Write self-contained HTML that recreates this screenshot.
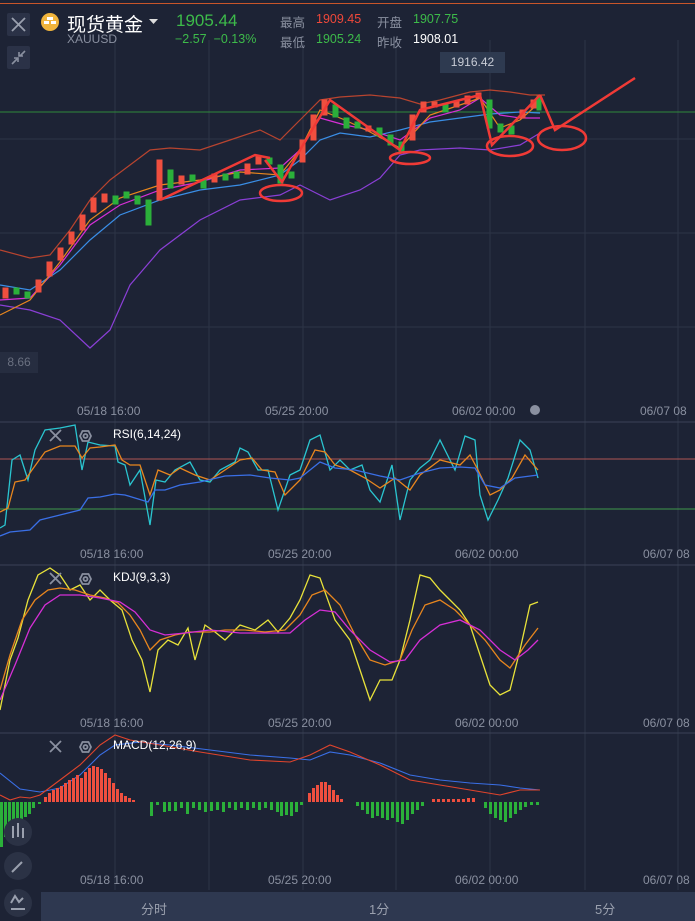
<!DOCTYPE html>
<html><head><meta charset="utf-8"><style>
html,body{margin:0;padding:0;background:#1d2335;width:695px;height:921px;overflow:hidden;font-family:"Liberation Sans","Noto Sans CJK SC",sans-serif}
.t{position:absolute;white-space:nowrap}
</style></head><body>
<div style="position:absolute;left:0;top:3px;width:695px;height:1px;background:#c8552a"></div>
<svg width="695" height="921" style="position:absolute;left:0;top:0">
<!-- grid -->
<g stroke="#2d3447" stroke-width="1">
<line x1="115" y1="40" x2="115" y2="890"/><line x1="209" y1="40" x2="209" y2="890"/><line x1="303" y1="40" x2="303" y2="890"/><line x1="396" y1="40" x2="396" y2="890"/><line x1="490" y1="40" x2="490" y2="890"/><line x1="585" y1="40" x2="585" y2="890"/><line x1="678" y1="40" x2="678" y2="890"/>
<line x1="0" y1="139" x2="695" y2="139"/><line x1="0" y1="233" x2="695" y2="233"/><line x1="0" y1="327" x2="695" y2="327"/>
</g>
<g stroke="#3a4256"><line x1="0" y1="422" x2="695" y2="422"/><line x1="0" y1="565" x2="695" y2="565"/><line x1="0" y1="733" x2="695" y2="733"/></g>
<line x1="0" y1="112" x2="695" y2="112" stroke="#2e8a3a"/>
<!-- bands -->
<g fill="none" stroke-width="1.2">
<polyline stroke="#b8442f" points="0,250 30,258 50,255 70,230 90,200 110,180 130,165 150,150 170,148 200,150 230,140 260,130 280,140 300,120 320,100 340,97 370,95 400,98 420,104 440,100 470,92 490,90 510,92 530,95 545,95"/>
<polyline stroke="#8a3fd6" points="0,305 30,310 60,320 90,348 110,330 130,285 160,250 200,220 240,200 280,195 300,185 330,200 360,190 380,178 400,155 420,150 460,148 490,150 520,145 540,133"/>
<polyline stroke="#3a8ee6" points="0,285 30,290 60,270 90,240 120,215 160,200 200,190 240,185 280,175 300,160 320,140 340,133 370,137 400,130 430,122 460,118 490,114 520,112 540,113"/>
<polyline stroke="#d62fd6" points="0,300 30,298 60,265 90,225 120,205 160,190 200,182 240,170 280,168 300,150 320,118 345,125 370,130 400,140 430,118 460,110 480,98 500,115 520,118 540,118"/>
<polyline stroke="#e8861e" points="0,315 30,300 60,262 90,220 120,198 160,185 200,180 240,172 280,175 300,150 320,110 345,120 370,132 400,148 430,115 460,105 480,98 500,128 520,120 540,102"/>
</g>
<!-- candles -->
<g id="c">
<g fill="#ef4f3f" stroke="#ef4f3f">
<rect x="3" y="288" width="5" height="10"/><rect x="36" y="280" width="5" height="12"/><rect x="47" y="262" width="5" height="14"/><rect x="58" y="248" width="5" height="12"/><rect x="69" y="232" width="5" height="12"/><rect x="80" y="215" width="5" height="15"/><rect x="91" y="198" width="5" height="14"/><rect x="102" y="194" width="5" height="8"/><rect x="157" y="160" width="5" height="40"/><rect x="179" y="176" width="5" height="8"/><rect x="212" y="174" width="5" height="8"/><rect x="245" y="164" width="5" height="10"/><rect x="256" y="156" width="5" height="8"/><rect x="300" y="140" width="5" height="22"/><rect x="311" y="115" width="5" height="25"/><rect x="322" y="100" width="5" height="15"/><rect x="366" y="126" width="5" height="5"/><rect x="410" y="115" width="5" height="25"/><rect x="421" y="102" width="5" height="10"/><rect x="432" y="102" width="5" height="5"/><rect x="454" y="102" width="5" height="5"/><rect x="465" y="96" width="5" height="8"/><rect x="476" y="93" width="5" height="5"/><rect x="520" y="110" width="5" height="8"/><rect x="531" y="100" width="5" height="8"/>
</g>
<g fill="#2bb03a" stroke="#2bb03a">
<rect x="14" y="288" width="5" height="6"/><rect x="25" y="292" width="5" height="6"/><rect x="113" y="196" width="5" height="8"/><rect x="124" y="192" width="5" height="6"/><rect x="135" y="196" width="5" height="8"/><rect x="146" y="200" width="5" height="25"/><rect x="168" y="170" width="5" height="18"/><rect x="190" y="175" width="5" height="6"/><rect x="201" y="180" width="5" height="8"/><rect x="223" y="174" width="5" height="6"/><rect x="234" y="172" width="5" height="6"/><rect x="267" y="158" width="5" height="6"/><rect x="278" y="165" width="5" height="18"/><rect x="289" y="172" width="5" height="6"/><rect x="333" y="105" width="5" height="12"/><rect x="344" y="118" width="5" height="10"/><rect x="355" y="122" width="5" height="6"/><rect x="377" y="128" width="5" height="8"/><rect x="388" y="135" width="5" height="10"/><rect x="399" y="142" width="5" height="10"/><rect x="443" y="104" width="5" height="8"/><rect x="487" y="100" width="5" height="28"/><rect x="498" y="124" width="5" height="8"/><rect x="509" y="126" width="5" height="8"/><rect x="537" y="96" width="4" height="14"/>
</g>
</g>
<!-- annotations -->
<g fill="none" stroke="#f03a36" stroke-width="2.5">
<polyline points="160,200 255,155 270,158"/><polyline points="265,160 282,182 300,150 330,100 400,150 420,110 480,95 492,145 540,95"/><polyline points="540,95 555,130 635,78"/>
<ellipse cx="281" cy="193" rx="21" ry="8"/><ellipse cx="410" cy="158" rx="20" ry="6"/><ellipse cx="510" cy="146" rx="23" ry="10"/><ellipse cx="562" cy="138" rx="24" ry="12"/>
</g>
<!-- RSI -->
<line x1="0" y1="459" x2="695" y2="459" stroke="#b05454"/><line x1="0" y1="509" x2="695" y2="509" stroke="#3f9a4a"/>
<g fill="none" stroke-width="1.3">
<polyline stroke="#2ac5d0" points="0,528 5,525 12,460 20,455 28,480 35,450 45,430 60,428 75,425 82,470 88,442 100,445 115,446 118,462 125,465 130,485 140,470 150,525 156,480 165,482 175,470 190,462 200,480 210,482 220,470 235,462 240,448 248,452 258,470 268,470 278,510 290,475 300,470 310,440 320,435 330,470 340,460 350,470 362,465 370,490 380,502 392,465 400,520 410,480 420,468 430,460 440,440 455,470 465,436 475,440 480,495 488,520 498,500 508,478 520,440 530,450 538,478"/>
<polyline stroke="#e8861e" points="0,512 8,508 15,482 25,480 32,470 45,452 60,446 75,446 82,458 90,448 100,447 115,445 122,460 130,465 140,465 150,495 158,470 170,475 180,468 195,475 210,480 225,470 240,460 252,458 262,470 275,472 285,495 300,480 315,450 325,452 335,465 350,470 365,478 380,488 395,478 410,490 420,475 440,460 460,465 470,455 478,470 490,495 500,490 512,478 525,455 538,470"/>
<polyline stroke="#3a6fe6" points="0,536 10,532 30,530 40,520 60,515 80,510 88,498 100,497 115,494 125,495 148,502 155,490 165,490 180,485 200,482 225,476 250,475 270,478 290,480 300,478 320,462 335,468 355,470 380,476 400,480 420,473 440,468 460,467 475,468 485,485 500,488 515,478 538,475"/>
</g>
<!-- KDJ -->
<g fill="none" stroke-width="1.3">
<polyline stroke="#e8e23a" points="0,710 10,660 18,638 28,600 38,575 50,568 60,575 70,590 80,585 90,600 100,590 110,600 122,610 132,640 142,660 150,692 158,650 168,640 178,645 188,628 195,660 205,625 215,632 225,640 240,625 255,630 268,620 278,632 290,618 300,600 310,575 320,578 335,620 350,640 360,670 370,700 380,680 392,680 400,660 410,620 420,575 430,578 440,590 450,600 460,610 470,625 480,655 490,685 500,695 510,690 520,650 530,605 538,602"/>
<polyline stroke="#e8861e" points="0,690 10,655 22,620 35,600 48,590 60,588 75,590 90,595 105,598 118,603 130,615 140,630 150,650 160,640 175,635 190,632 210,632 225,630 245,630 265,632 285,630 300,615 312,595 325,590 340,605 355,635 370,660 385,665 400,660 412,630 425,605 440,600 455,610 470,625 485,640 500,660 510,668 525,645 538,628"/>
<polyline stroke="#d62fd6" points="0,700 15,665 30,628 45,605 60,595 80,595 100,598 120,602 135,612 150,630 165,635 185,633 210,630 240,633 265,633 290,633 305,620 320,610 335,612 350,630 370,650 390,662 405,660 420,640 440,625 460,620 480,630 500,650 515,660 528,650 538,640"/>
</g>
<!-- MACD -->
<g fill="none" stroke-width="1.1">
<polyline stroke="#3a6fe6" points="0,773 20,789 40,792 60,788 80,775 100,755 115,745 140,742 170,745 210,750 250,755 290,758 310,760 330,752 350,755 380,763 410,775 440,780 470,783 500,785 520,788 540,790"/>
<polyline stroke="#e0442c" points="0,795 10,800 20,797 30,798 40,795 60,780 80,765 100,745 115,735 130,740 160,745 200,752 250,760 290,762 310,755 330,745 350,752 380,765 410,780 440,785 470,790 500,795 520,790 540,790"/>
</g>
<g fill="#ef4f3f">
<rect x="44" y="797" width="3" height="5"/><rect x="48" y="793" width="3" height="9"/><rect x="52" y="790" width="3" height="12"/><rect x="56" y="788" width="3" height="14"/><rect x="60" y="786" width="3" height="16"/><rect x="64" y="783" width="3" height="19"/><rect x="68" y="780" width="3" height="22"/><rect x="72" y="778" width="3" height="24"/><rect x="76" y="775" width="3" height="27"/><rect x="80" y="778" width="3" height="24"/><rect x="84" y="772" width="3" height="30"/><rect x="88" y="768" width="3" height="34"/><rect x="92" y="766" width="3" height="36"/><rect x="96" y="767" width="3" height="35"/><rect x="100" y="769" width="3" height="33"/><rect x="104" y="773" width="3" height="29"/><rect x="108" y="778" width="3" height="24"/><rect x="112" y="783" width="3" height="19"/><rect x="116" y="789" width="3" height="13"/><rect x="120" y="793" width="3" height="9"/><rect x="124" y="796" width="3" height="6"/><rect x="128" y="798" width="3" height="4"/><rect x="132" y="800" width="3" height="2"/>
<rect x="308" y="793" width="3" height="9"/><rect x="312" y="788" width="3" height="14"/><rect x="316" y="785" width="3" height="17"/><rect x="320" y="782" width="3" height="20"/><rect x="324" y="782" width="3" height="20"/><rect x="328" y="785" width="3" height="17"/><rect x="332" y="790" width="3" height="12"/><rect x="336" y="795" width="3" height="7"/><rect x="340" y="799" width="3" height="3"/>
<rect x="432" y="799" width="3" height="3"/><rect x="437" y="799" width="3" height="3"/><rect x="442" y="799" width="3" height="3"/><rect x="447" y="799" width="3" height="3"/><rect x="452" y="799" width="3" height="3"/><rect x="457" y="799" width="3" height="3"/><rect x="462" y="799" width="3" height="3"/><rect x="467" y="798" width="3" height="4"/><rect x="472" y="798" width="3" height="4"/>
</g>
<g fill="#2bb03a">
<rect x="0" y="802" width="3" height="45"/><rect x="4" y="802" width="3" height="35"/><rect x="8" y="802" width="3" height="30"/><rect x="12" y="802" width="3" height="28"/><rect x="16" y="802" width="3" height="25"/><rect x="20" y="802" width="3" height="20"/><rect x="24" y="802" width="3" height="15"/><rect x="28" y="802" width="3" height="12"/><rect x="32" y="802" width="3" height="6"/><rect x="38" y="802" width="3" height="2"/>
<rect x="150" y="802" width="3" height="14"/><rect x="156" y="802" width="3" height="3"/><rect x="163" y="802" width="3" height="10"/><rect x="168" y="802" width="3" height="9"/><rect x="174" y="802" width="3" height="9"/><rect x="180" y="802" width="3" height="6"/><rect x="186" y="802" width="3" height="12"/><rect x="192" y="802" width="3" height="6"/><rect x="198" y="802" width="3" height="8"/><rect x="204" y="802" width="3" height="10"/><rect x="210" y="802" width="3" height="9"/><rect x="216" y="802" width="3" height="8"/><rect x="222" y="802" width="3" height="10"/><rect x="228" y="802" width="3" height="6"/><rect x="234" y="802" width="3" height="8"/><rect x="240" y="802" width="3" height="6"/><rect x="246" y="802" width="3" height="8"/><rect x="252" y="802" width="3" height="6"/><rect x="258" y="802" width="3" height="8"/><rect x="264" y="802" width="3" height="6"/><rect x="270" y="802" width="3" height="8"/><rect x="276" y="802" width="3" height="10"/><rect x="280" y="802" width="3" height="14"/><rect x="285" y="802" width="3" height="13"/><rect x="290" y="802" width="3" height="14"/><rect x="295" y="802" width="3" height="10"/><rect x="300" y="802" width="3" height="3"/>
<rect x="356" y="802" width="3" height="4"/><rect x="361" y="802" width="3" height="8"/><rect x="366" y="802" width="3" height="12"/><rect x="371" y="802" width="3" height="16"/><rect x="376" y="802" width="3" height="14"/><rect x="381" y="802" width="3" height="16"/><rect x="386" y="802" width="3" height="18"/><rect x="391" y="802" width="3" height="16"/><rect x="396" y="802" width="3" height="20"/><rect x="401" y="802" width="3" height="22"/><rect x="406" y="802" width="3" height="18"/><rect x="411" y="802" width="3" height="12"/><rect x="416" y="802" width="3" height="8"/><rect x="421" y="802" width="3" height="4"/>
<rect x="484" y="802" width="3" height="6"/><rect x="489" y="802" width="3" height="12"/><rect x="494" y="802" width="3" height="16"/><rect x="499" y="802" width="3" height="18"/><rect x="504" y="802" width="3" height="20"/><rect x="509" y="802" width="3" height="16"/><rect x="514" y="802" width="3" height="12"/><rect x="519" y="802" width="3" height="8"/><rect x="524" y="802" width="3" height="5"/><rect x="530" y="802" width="3" height="3"/><rect x="536" y="802" width="3" height="3"/>
</g>
<!-- indicator icons -->
<g stroke="#8a90a0" stroke-width="1.8" fill="none">
<path d="M50,430 l11,11 M61,430 l-11,11"/><path d="M50,573 l11,11 M61,573 l-11,11"/><path d="M50,741 l11,11 M61,741 l-11,11"/>
<polygon points="80,436 82.5,431 88.5,431 91,436 88.5,441 82.5,441"/><circle cx="85.5" cy="436" r="2"/>
<polygon points="80,579 82.5,574 88.5,574 91,579 88.5,584 82.5,584"/><circle cx="85.5" cy="579" r="2"/>
<polygon points="80,747 82.5,742 88.5,742 91,747 88.5,752 82.5,752"/><circle cx="85.5" cy="747" r="2"/>
</g>
<!-- left tool buttons -->
<circle cx="18" cy="832" r="14" fill="#2b3245"/><circle cx="18" cy="866" r="14" fill="#2b3245"/><circle cx="18" cy="903" r="14" fill="#2b3245"/>
<g stroke="#9aa0ae" stroke-width="2" fill="none"><path d="M12,872 l10,-10"/><path d="M11,903 l4,-7 l4,6 l4,-4 M11,909 h14"/><path d="M13,826 v12 M18,823 v14 M23,828 v10"/></g>
<!-- header buttons -->
<rect x="7" y="13" width="23" height="23" rx="2" fill="#2b3247"/><path d="M12,18 l13,13 M25,18 l-13,13" stroke="#9aa0ae" stroke-width="1.8"/>
<rect x="7" y="46" width="23" height="23" rx="2" fill="#2b3247"/><path d="M12,64 l5,-5 M14,58 h4 v4 M25,51 l-5,5 M19,52 v4 h4" stroke="#8a90a0" stroke-width="1.6" fill="none"/>
<circle cx="50" cy="22" r="9" fill="#f0b43c"/><rect x="47" y="17" width="6" height="3" fill="#fff"/><rect x="44" y="21" width="5" height="3" fill="#fff"/><rect x="51" y="21" width="5" height="3" fill="#fff"/>
<path d="M149,19 h9 l-4.5,5z" fill="#ddd"/>
<circle cx="535" cy="410" r="5" fill="#8a90a0"/>
</svg>
<div class="t" style="left:67px;top:10px;font-size:19px;color:#fff">现货黄金</div>
<div class="t" style="left:67px;top:32px;font-size:12px;color:#8a90a0">XAUUSD</div>
<div class="t" style="left:176px;top:11px;font-size:17px;color:#3dbb4a">1905.44</div>
<div class="t" style="left:175px;top:32px;font-size:12.5px;color:#3dbb4a">−2.57 &nbsp;−0.13%</div>
<div class="t" style="left:280px;top:12px;font-size:12.5px;color:#8a90a0">最高</div>
<div class="t" style="left:316px;top:12px;font-size:12.5px;color:#f0483a">1909.45</div>
<div class="t" style="left:377px;top:12px;font-size:12.5px;color:#8a90a0">开盘</div>
<div class="t" style="left:413px;top:12px;font-size:12.5px;color:#3dbb4a">1907.75</div>
<div class="t" style="left:280px;top:32px;font-size:12.5px;color:#8a90a0">最低</div>
<div class="t" style="left:316px;top:32px;font-size:12.5px;color:#3dbb4a">1905.24</div>
<div class="t" style="left:377px;top:32px;font-size:12.5px;color:#8a90a0">昨收</div>
<div class="t" style="left:413px;top:32px;font-size:12.5px;color:#fff">1908.01</div>
<div class="t" style="left:440px;top:52px;width:65px;height:21px;background:#2e3a50;color:#c8ccd6;font-size:12px;line-height:21px;text-align:center">1916.42</div>
<div class="t" style="left:0;top:352px;width:38px;height:21px;background:#262d40;color:#6a7080;font-size:12px;line-height:21px;text-align:center">8.66</div>
<div class="t" style="left:77px;top:404px;font-size:12px;color:#8a90a0">05/18 16:00</div>
<div class="t" style="left:265px;top:404px;font-size:12px;color:#8a90a0">05/25 20:00</div>
<div class="t" style="left:452px;top:404px;font-size:12px;color:#8a90a0">06/02 00:00</div>
<div class="t" style="left:640px;top:404px;font-size:12px;color:#8a90a0">06/07 08</div>
<div class="t" style="left:113px;top:427px;font-size:12px;color:#fff">RSI(6,14,24)</div>
<div class="t" style="left:80px;top:547px;font-size:12px;color:#8a90a0">05/18 16:00</div>
<div class="t" style="left:268px;top:547px;font-size:12px;color:#8a90a0">05/25 20:00</div>
<div class="t" style="left:455px;top:547px;font-size:12px;color:#8a90a0">06/02 00:00</div>
<div class="t" style="left:643px;top:547px;font-size:12px;color:#8a90a0">06/07 08</div>
<div class="t" style="left:113px;top:570px;font-size:12px;color:#fff">KDJ(9,3,3)</div>
<div class="t" style="left:80px;top:716px;font-size:12px;color:#8a90a0">05/18 16:00</div>
<div class="t" style="left:268px;top:716px;font-size:12px;color:#8a90a0">05/25 20:00</div>
<div class="t" style="left:455px;top:716px;font-size:12px;color:#8a90a0">06/02 00:00</div>
<div class="t" style="left:643px;top:716px;font-size:12px;color:#8a90a0">06/07 08</div>
<div class="t" style="left:113px;top:738px;font-size:12px;color:#fff">MACD(12,26,9)</div>
<div class="t" style="left:80px;top:873px;font-size:12px;color:#8a90a0">05/18 16:00</div>
<div class="t" style="left:268px;top:873px;font-size:12px;color:#8a90a0">05/25 20:00</div>
<div class="t" style="left:455px;top:873px;font-size:12px;color:#8a90a0">06/02 00:00</div>
<div class="t" style="left:643px;top:873px;font-size:12px;color:#8a90a0">06/07 08</div>
<div class="t" style="left:41px;top:892px;width:654px;height:29px;background:#2e3850"></div>
<div class="t" style="left:141px;top:899px;font-size:13px;color:#9aa0ae">分时</div>
<div class="t" style="left:369px;top:899px;font-size:13px;color:#9aa0ae">1分</div>
<div class="t" style="left:595px;top:899px;font-size:13px;color:#9aa0ae">5分</div>
</body></html>
